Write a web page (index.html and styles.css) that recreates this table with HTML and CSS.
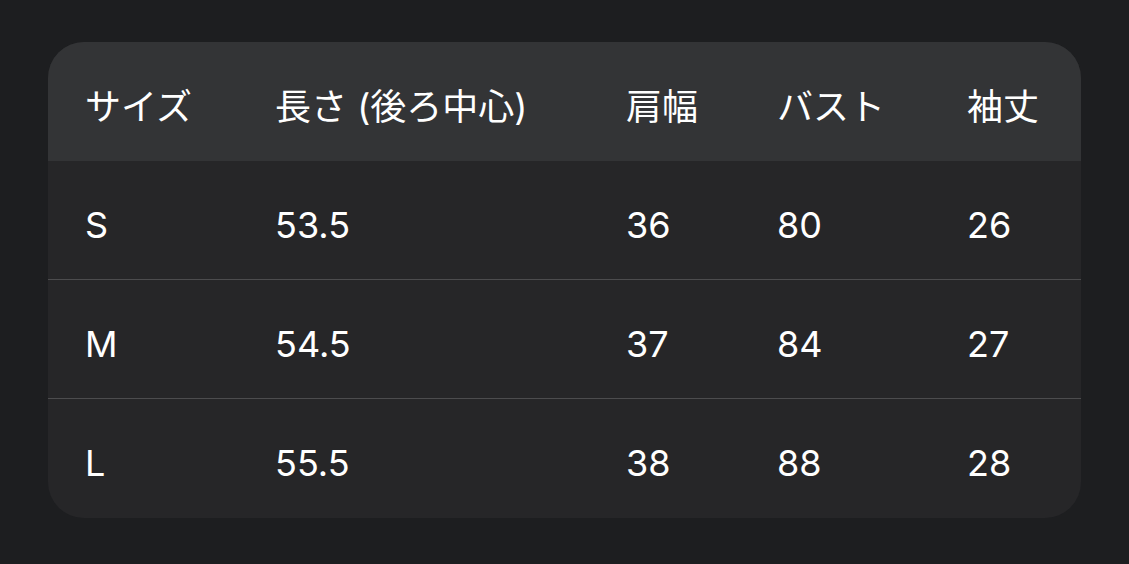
FILE: index.html
```html
<!DOCTYPE html>
<html lang="ja">
<head>
<meta charset="utf-8">
<link rel="stylesheet" href="styles.css">
</head>
<body>
<div class="card">
  <div class="row head">
    <div class="cell">サイズ</div>
    <div class="cell">長さ (後ろ中心)</div>
    <div class="cell">肩幅</div>
    <div class="cell">バスト</div>
    <div class="cell">袖丈</div>
  </div>
  <div class="row body">
    <div class="cell">S</div>
    <div class="cell">53.5</div>
    <div class="cell">36</div>
    <div class="cell">80</div>
    <div class="cell">26</div>
  </div>
  <div class="row body">
    <div class="cell">M</div>
    <div class="cell">54.5</div>
    <div class="cell">37</div>
    <div class="cell">84</div>
    <div class="cell">27</div>
  </div>
  <div class="row body last">
    <div class="cell">L</div>
    <div class="cell">55.5</div>
    <div class="cell">38</div>
    <div class="cell">88</div>
    <div class="cell">28</div>
  </div>
</div>
</body>
</html>
```
FILE: styles.css
```css
html, body {
  margin: 0;
  padding: 0;
  background: #1d1e20;
}
body {
  padding: 42px 48px;
  font-family: Inter, "Noto Sans CJK JP", sans-serif;
  color: #ffffff;
}
.card {
  width: 1033px;
  border-radius: 36px;
  overflow: hidden;
  background: #262628;
}
.row {
  display: grid;
  grid-template-columns: 190px 351px 151px 190px 151px;
}
.cell {
  padding-left: 37px;
  font-size: 36px;
  line-height: 36px;
  white-space: nowrap;
}
.head {
  background: #333436;
  height: 119px;
  box-sizing: border-box;
  padding-top: 47px;
}
.body {
  height: 119px;
  box-sizing: border-box;
  padding-top: 46px;
  border-bottom: 1px solid #4c4c4e;
}
.body.last {
  border-bottom: none;
}
```
